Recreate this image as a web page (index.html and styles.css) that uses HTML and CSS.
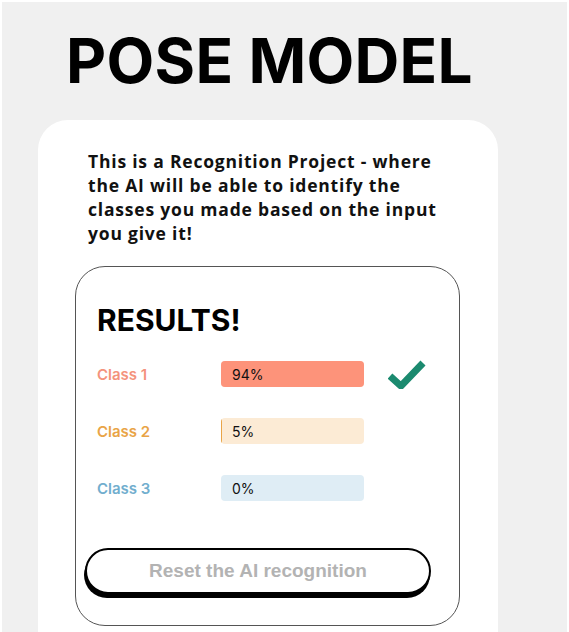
FILE: index.html
```html
<!DOCTYPE html>
<html>
<head>
<meta charset="utf-8">
<link rel="stylesheet" href="styles.css">
</head>
<body>
<div class="page">
  <h1 class="title">POSE MODEL</h1>
  <div class="card">
    <p class="intro">This is a Recognition Project - where the AI will be able to identify the classes you made based on the input you give it!</p>
    <div class="results">
      <h2 class="results-title">RESULTS!</h2>
      <div class="row">
        <span class="label c1">Class 1</span>
        <div class="bar b1"><div class="fill f1" style="width:100%"></div><span class="pct">94%</span></div>
        <svg class="check" width="38" height="30" viewBox="0 0 38 30"><path d="M2 17 L13 27 L35 4" fill="none" stroke="#1b8a6f" stroke-width="7"/></svg>
      </div>
      <div class="row">
        <span class="label c2">Class 2</span>
        <div class="bar b2"><div class="fill f2" style="width:1px"></div><span class="pct">5%</span></div>
      </div>
      <div class="row">
        <span class="label c3">Class 3</span>
        <div class="bar b3"><span class="pct">0%</span></div>
      </div>
      <button class="reset">Reset the AI recognition</button>
    </div>
  </div>
</div>
</body>
</html>
```
FILE: styles.css
```css
html { background: #fff; }
body {
  margin: 2px 2px 0 2px;
  background: #f0f0f0;
  height: 630px;
  overflow: hidden;
  font-family: "Open Sans", "DejaVu Sans", sans-serif;
}
.page {
  padding: 22px 0 0 36px;
}
.title {
  margin: 0 0 0 28px;
  font-family: Inter, "DejaVu Sans", sans-serif;
  font-weight: 700;
  font-size: 62px;
  line-height: 74px;
  letter-spacing: 0.3px;
  color: #000;
}
.card {
  margin-top: 22px;
  width: 460px;
  height: 560px;
  background: #fff;
  border-radius: 30px;
  padding: 29px 0 0 0;
  box-sizing: border-box;
}
.intro {
  margin: 0 0 0 50px;
  width: 360px;
  font-weight: 700;
  font-size: 17.5px;
  line-height: 24px;
  letter-spacing: 0.8px;
  color: #111;
}
.results {
  margin: 21px 0 0 37px;
  width: 385px;
  height: 360px;
  box-sizing: border-box;
  border: 1.5px solid #555;
  border-radius: 30px;
  padding: 35px 0 0 21px;
}
.results-title {
  margin: 0 0 23px 0;
  font-family: Inter, "DejaVu Sans", sans-serif;
  font-weight: 700;
  font-size: 30px;
  line-height: 36px;
  letter-spacing: 0;
  color: #000;
}
.row {
  display: flex;
  align-items: center;
  height: 26px;
  margin-bottom: 31px;
}
.label {
  width: 124px;
  font-family: Inter, "DejaVu Sans", sans-serif;
  font-weight: 600;
  font-size: 15px;
}
.c1 { color: #f4937c; }
.c2 { color: #e9a446; }
.c3 { color: #71aece; }
.bar {
  position: relative;
  width: 143px;
  height: 26px;
  border-radius: 4px;
  overflow: hidden;
  display: flex;
  align-items: center;
}
.b1 { background: #fde0d6; }
.b2 { background: #fcebd5; }
.b3 { background: #dfedf5; }
.fill {
  position: absolute;
  left: 0; top: 0; bottom: 0;
}
.f1 { background: #fd937a; }
.f2 { background: #e9a446; }
.pct {
  position: relative;
  margin-left: 11px;
  font-family: Inter, "DejaVu Sans", sans-serif;
  font-size: 14px;
  color: #111;
}
.check {
  margin-left: 24px;
}
.reset {
  display: block;
  margin: 47px 0 0 -12px;
  width: 346px;
  height: 46px;
  background: #fff;
  border: 2px solid #000;
  border-radius: 23px;
  box-shadow: -1px 4px 0 #000;
  font-family: "Liberation Sans", Arial, sans-serif;
  font-weight: 700;
  font-size: 19px;
  color: #b3b3b3;
}
```
